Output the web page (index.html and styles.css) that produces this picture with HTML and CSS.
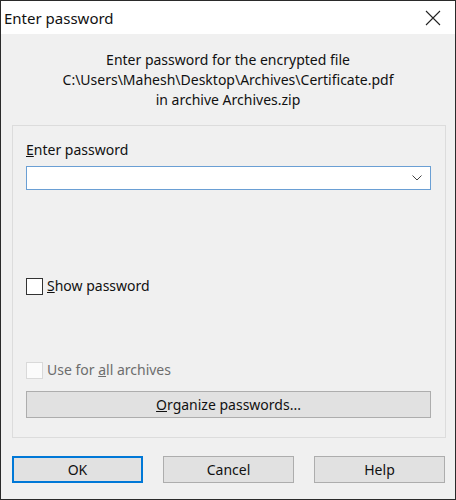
FILE: index.html
```html
<!DOCTYPE html>
<html>
<head>
<meta charset="utf-8">
<link rel="stylesheet" href="styles.css">
</head>
<body>
<div class="window">
  <div class="titlebar">
    <span class="title">Enter password</span>
    <svg class="close" width="16" height="16" viewBox="0 0 16 16"><path d="M1 1 L15 15 M15 1 L1 15" stroke="#222" stroke-width="1.1" fill="none"/></svg>
  </div>
  <div class="content">
    <div class="message">
      <div>Enter password for the encrypted file</div>
      <div>C:\Users\Mahesh\Desktop\Archives\Certificate.pdf</div>
      <div>in archive Archives.zip</div>
    </div>
    <div class="group">
      <div class="label"><u>E</u>nter password</div>
      <div class="combo">
        <svg class="chev" width="10" height="6" viewBox="0 0 10 6"><path d="M0.5 0.5 L5 5 L9.5 0.5" stroke="#444" stroke-width="1" fill="none"/></svg>
      </div>
      <div class="check show">
        <span class="box"></span><span><u>S</u>how password</span>
      </div>
      <div class="check disabled">
        <span class="box"></span><span>Use for <u>a</u>ll archives</span>
      </div>
      <div class="btn wide"><span><u>O</u>rganize passwords...</span></div>
    </div>
    <div class="buttons">
      <div class="btn default">OK</div>
      <div class="btn">Cancel</div>
      <div class="btn">Help</div>
    </div>
  </div>
</div>
</body>
</html>
```
FILE: styles.css
```css
html, body {
  margin: 0;
  padding: 0;
  background: #f0f0f0;
}
body {
  font-family: "Noto Sans", "Open Sans", sans-serif;
  font-size: 14px;
  color: #111;
}
.window {
  width: 456px;
  height: 500px;
  box-sizing: border-box;
  border: 1px solid #2a2a2a;
  background: #f0f0f0;
  display: flex;
  flex-direction: column;
}
.titlebar {
  height: 33px;
  background: #fff;
  display: flex;
  align-items: center;
  justify-content: space-between;
  padding: 0 14px 0 3px;
}
.title {
  font-size: 15px;
  line-height: 20px;
}
.close {
  display: block;
}
.content {
  flex: 1;
  display: flex;
  flex-direction: column;
}
.message {
  margin-top: 16px;
  text-align: center;
  line-height: 20px;
}
.group {
  margin: 15px 9px 0 11px;
  border: 1px solid #dcdcdc;
  padding: 14px 14px 19px 13px;
  display: flex;
  flex-direction: column;
  height: 313px;
  box-sizing: border-box;
}
.label {
  line-height: 20px;
}
.combo {
  margin-top: 6px;
  height: 24px;
  box-sizing: border-box;
  border: 1px solid #6a9fd4;
  background: #fff;
  display: flex;
  align-items: center;
  justify-content: flex-end;
  padding-right: 8px;
}
.check {
  display: flex;
  align-items: center;
  line-height: 20px;
}
.check .box {
  width: 17px;
  height: 17px;
  box-sizing: border-box;
  border: 1px solid #333;
  background: #fff;
  margin-right: 4px;
}
.show {
  margin-top: 86px;
}
.disabled {
  margin-top: 64px;
  color: #6d6d6d;
}
.disabled .box {
  border-color: #d9d9d9;
  background: #fbfbfb;
}
.btn {
  height: 27px;
  box-sizing: border-box;
  border: 1px solid #adadad;
  background: #e1e1e1;
  display: flex;
  align-items: center;
  justify-content: center;
  line-height: 20px;
}
.wide {
  margin-top: auto;
}
.buttons {
  margin: 18px 0 0 11px;
  display: flex;
  gap: 20px;
}
.buttons .btn {
  width: 131px;
}
.buttons .default {
  border: 2px solid #0078d7;
}
```
